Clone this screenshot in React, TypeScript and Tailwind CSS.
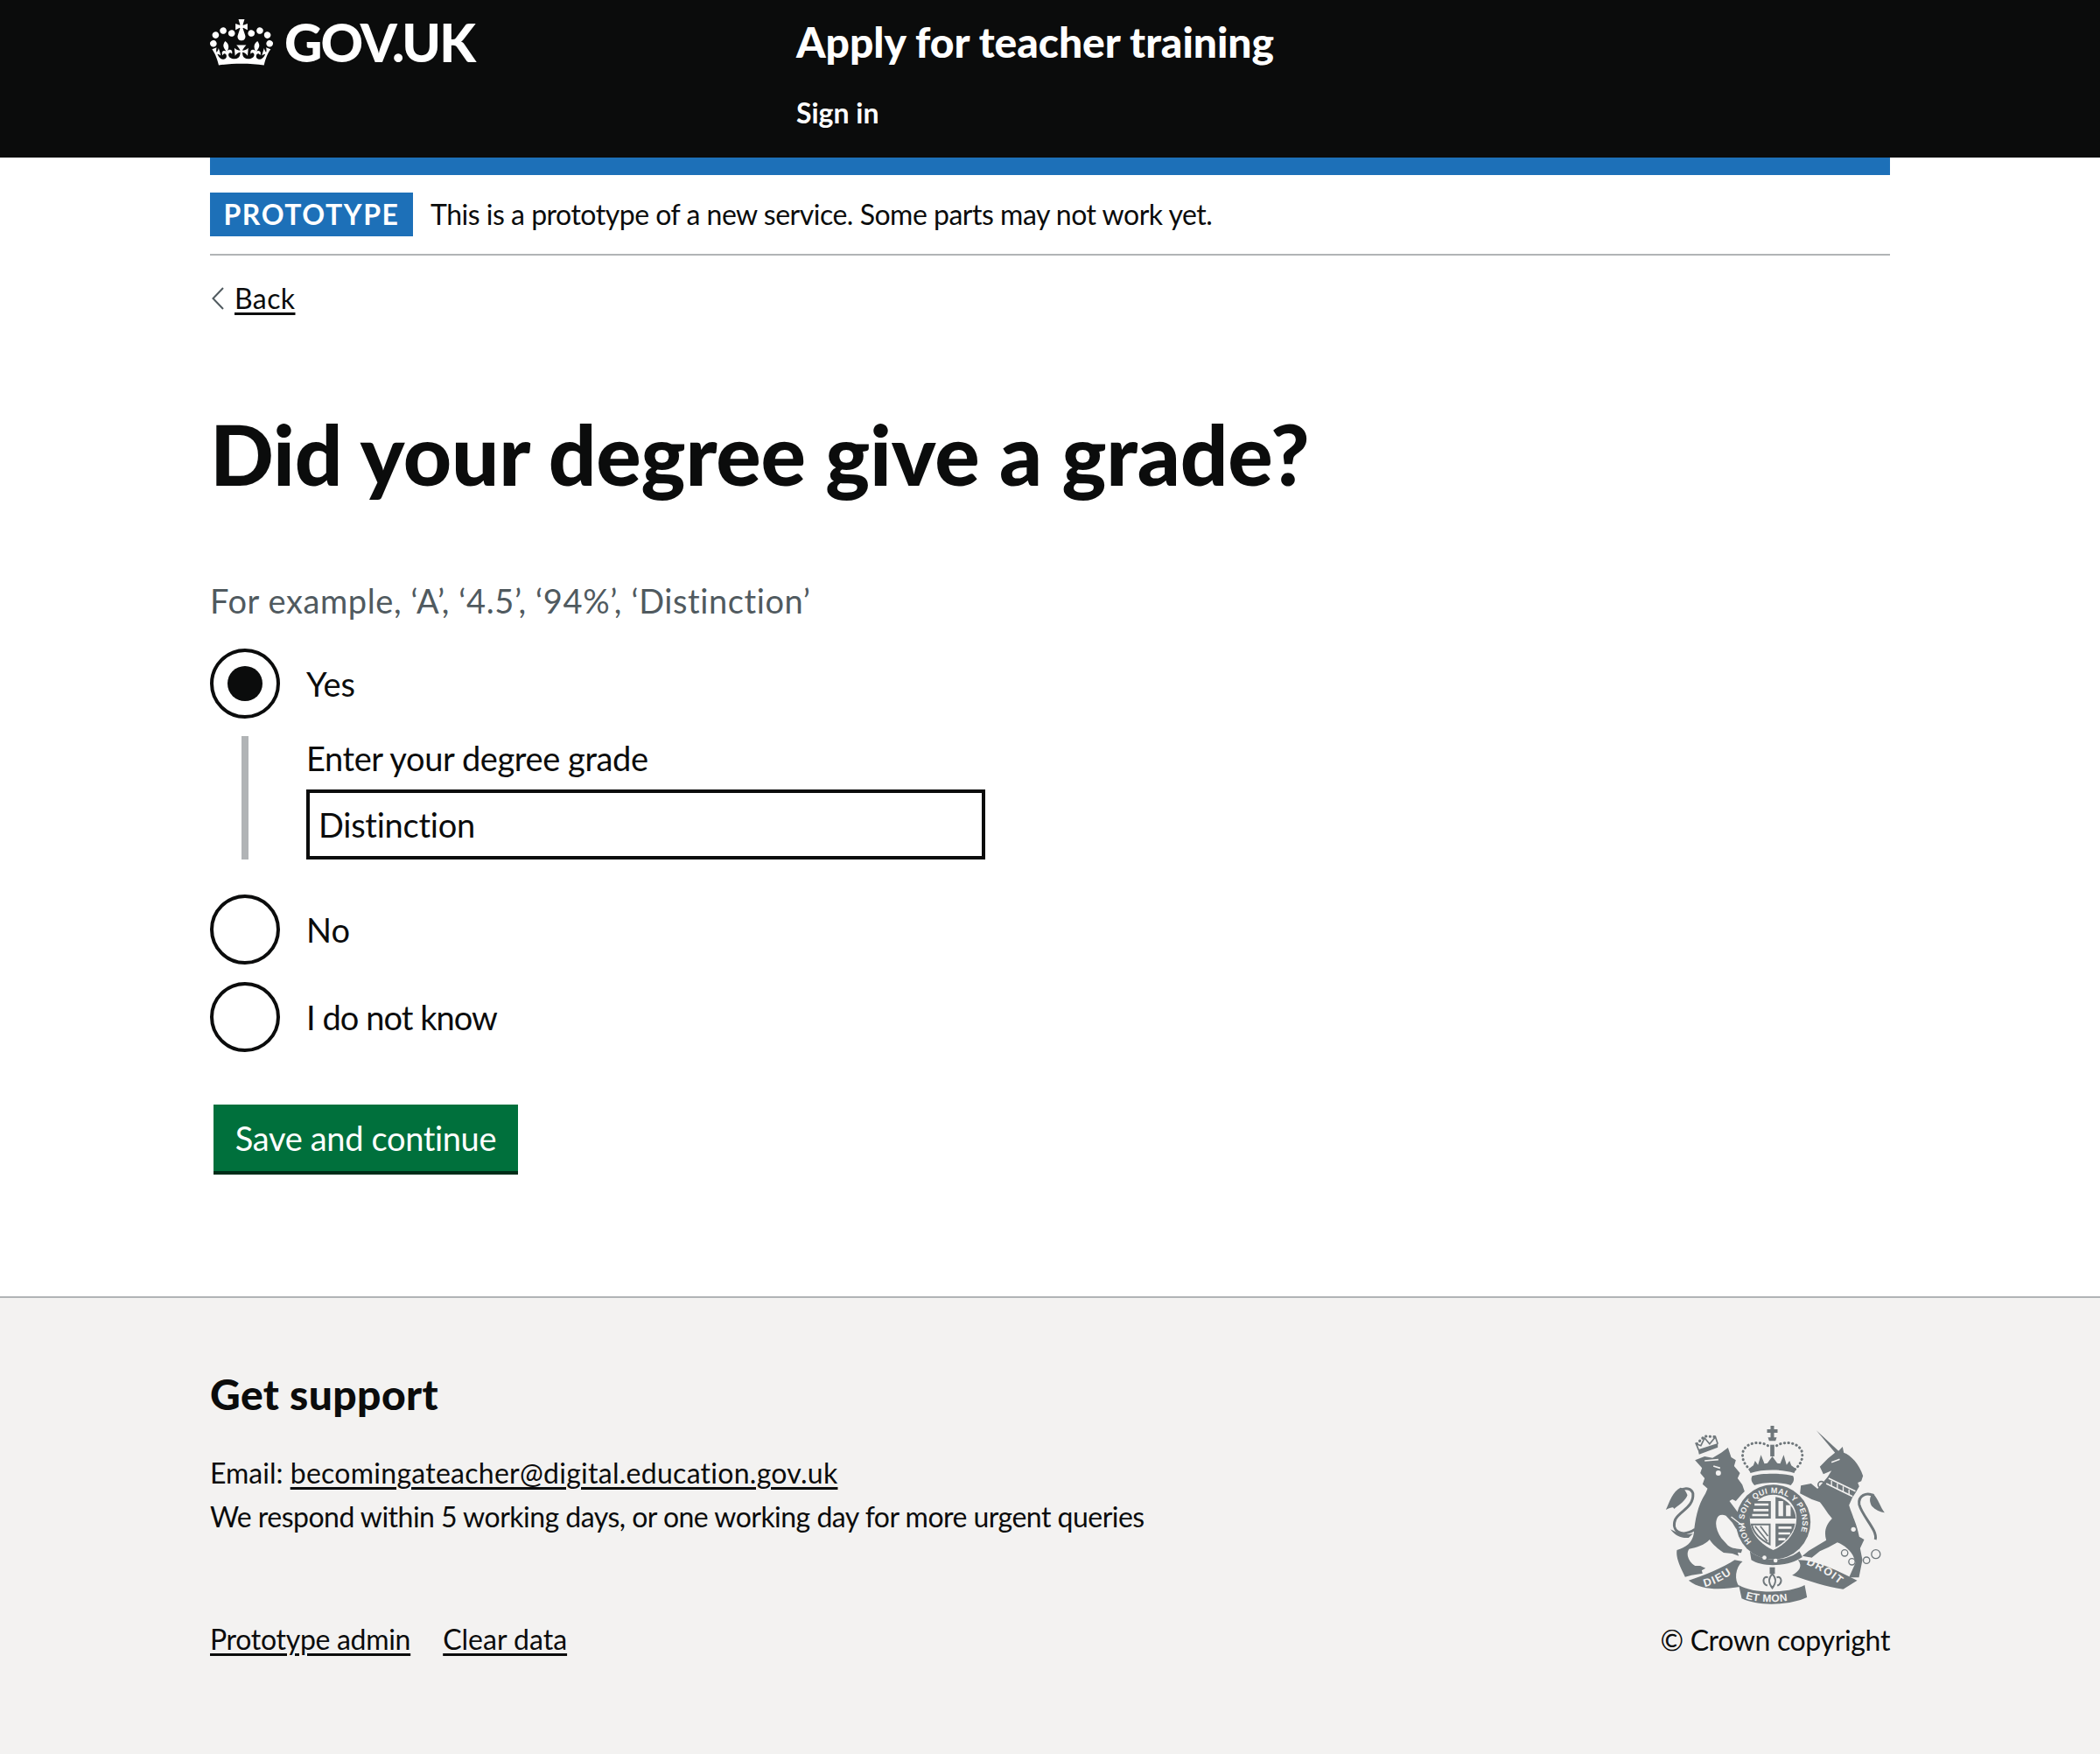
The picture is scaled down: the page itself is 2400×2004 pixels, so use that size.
const crown = "M25 30.2c3.5 1.5 7.7-.2 9.1-3.7 1.5-3.6-.2-7.8-3.9-9.2-3.6-1.4-7.6.3-9.1 3.9-1.4 3.5.3 7.5 3.9 9zM9 39.5c3.6 1.5 7.8-.2 9.2-3.7 1.5-3.6-.2-7.8-3.9-9.1-3.6-1.5-7.6.2-9.1 3.8-1.4 3.5.3 7.5 3.8 9zM4.4 57.2c3.5 1.5 7.7-.2 9.1-3.8 1.5-3.6-.2-7.7-3.9-9.1-3.5-1.5-7.6.3-9.1 3.8-1.4 3.5.3 7.6 3.9 9.1zm38.3-21.4c3.5 1.5 7.7-.2 9.1-3.8 1.5-3.6-.2-7.7-3.9-9.1-3.6-1.5-7.6.3-9.1 3.8-1.3 3.6.4 7.7 3.9 9.1zm64.4-5.6c-3.6 1.5-7.8-.2-9.1-3.7-1.5-3.6.2-7.8 3.8-9.2 3.6-1.4 7.7.3 9.2 3.9 1.3 3.5-.4 7.5-3.9 9zm15.9 9.3c-3.6 1.5-7.7-.2-9.1-3.7-1.5-3.6.2-7.8 3.7-9.1 3.6-1.5 7.7.2 9.2 3.8 1.5 3.5-.3 7.5-3.8 9zm4.7 17.7c-3.6 1.5-7.8-.2-9.2-3.8-1.5-3.6.2-7.7 3.9-9.1 3.6-1.5 7.7.3 9.2 3.8 1.3 3.5-.4 7.6-3.9 9.1zM89.3 35.8c-3.6 1.5-7.8-.2-9.2-3.8-1.4-3.6.2-7.7 3.9-9.1 3.6-1.5 7.7.3 9.2 3.8 1.4 3.6-.3 7.7-3.9 9.1zM69.7 17.7l8.9 4.7V9.3l-8.9 2.8c-.2-.3-.5-.6-.9-.9L72.4 0H59.6l3.5 11.2c-.3.3-.6.5-.9.9l-8.8-2.8v13.1l8.8-4.7c.3.3.6.7.9.9l-5 15.4v.1c-.2.8-.4 1.6-.4 2.4 0 4.1 3.1 7.5 7 8.1h.2c.3 0 .7.1 1 .1.4 0 .7 0 1-.1h.2c4-.6 7.1-4.1 7.1-8.1 0-.8-.1-1.7-.4-2.4V34l-5.1-15.4c.4-.2.7-.6 1-.9zM66 92.8c16.9 0 32.8 1.1 47.1 3.2 4-16.9 8.9-26.7 14-33.5l-9.6-3.4c1 4.9 1.1 7.2 0 10.2-1.5-1.4-3-4.3-4.2-8.7L108.6 76c2.8-2 5-3.2 7.5-3.3-4.4 9.4-10 11.9-13.6 11.2-4.3-.8-6.3-4.6-5.6-7.9 1-4.7 5.7-5.9 8-.5 4.3-8.7-3-11.4-7.6-8.8 7.1-7.2 7.9-13.5 2.1-21.1-8 6.1-8.1 12.3-4.5 20.8-4.7-5.4-12.1-2.5-9.5 6.2 3.4-5.2 7.9-2 7.2 3.1-.6 4.3-6.4 7.8-13.5 7.2-10.3-.9-10.9-8-11.2-13.8 2.5-.5 7.1 1.8 11 7.3L80.2 60c-4.1 4.4-8 5.3-12.3 5.4 1.4-4.4 8-11.6 8-11.6H55.5s6.4 7.2 7.9 11.6c-4.2-.1-8-1-12.3-5.4l1.4 16.4c3.9-5.5 8.5-7.7 10.9-7.3-.3 5.8-.9 12.8-11.1 13.8-7.2.6-12.9-2.9-13.5-7.2-.7-5 3.8-8.3 7.1-3.1 2.7-8.7-4.6-11.6-9.4-6.2 3.7-8.5 3.6-14.7-4.6-20.8-5.8 7.6-5 13.9 2.2 21.1-4.7-2.6-11.9.1-7.7 8.8 2.3-5.5 7.1-4.2 8.1.5.7 3.3-1.3 7.1-5.7 7.9-3.5.7-9-1.8-13.5-11.2 2.5.1 4.7 1.3 7.5 3.3l-4.7-15.4c-1.2 4.4-2.7 7.2-4.3 8.7-1.1-3-.9-5.3 0-10.2l-9.5 3.4c5 6.9 9.9 16.7 14 33.5 14.8-2.1 30.8-3.2 47.7-3.2z";

const GREY = '#6f777b';
const BG = '#f3f2f1';

// Royal coat of arms, coordinates taken from a 3x crop of the crest
function RoyalArms() {
  return (
    <svg viewBox="70 60 755 612" className="w-[252px] h-[204px] mr-[5px]" aria-hidden="true">
      <defs>
        <path id="garter" d="M366 458 A100 100 0 1 1 514 458" />
        <path id="dieu" d="M205 612 C245 603 285 580 318 552" />
        <path id="etmon" d="M345 652 C390 668 490 668 530 648" />
        <path id="droit" d="M552 535 C590 548 640 580 680 614" />
      </defs>
      <g fill={GREY}>
        {/* lion */}
        <path d="M172 178L205 165L232 170L262 152L285 135L296 168L312 178L306 198L326 222L318 240L334 262L342 285C330 295 322 308 312 318L300 312L290 318L350 398L332 408L330 420L340 405C330 415 320 420 312 412L300 392L278 368C262 362 250 366 246 382C240 400 248 425 262 445L285 470C300 482 318 480 334 484L330 496L318 494L322 506L300 498L270 495C250 482 232 466 222 450C205 468 178 478 152 482C140 498 148 525 172 540L190 540L208 548L195 556L198 566L160 572L138 578C122 545 105 512 110 486C140 476 163 462 168 428C172 385 180 335 208 292L215 275L198 260L205 240L190 222L196 205Z" />
        <path d="M122 272C95 285 85 320 72 348C90 340 98 336 100 345C120 330 138 318 146 298C140 280 130 272 122 272Z" />
        <path d="M88 415C112 428 135 436 165 430L150 444C125 446 105 438 88 415Z" />
        {/* lion's crown */}
        <path d="M186 158L250 134L250 120L182 142Z" />
        {/* unicorn */}
        <path d="M588 76L664 146L678 132L682 152C705 160 735 190 748 232L742 250L730 255L735 268L722 290L712 305L700 332C712 370 728 400 735 440L752 450L738 480L746 520L734 580L700 580L722 530C716 495 690 472 660 460C640 472 620 482 600 490L572 512L540 506L562 488L622 452C612 420 624 395 642 378C622 355 612 335 600 322L572 312L532 292L535 265L570 258L592 276L626 236L640 214L612 226L600 200L628 172L652 152Z" />
        <path d="M782 292C800 310 808 340 822 358C808 356 790 348 778 335C770 322 768 305 782 292Z" />
        {/* central crown */}
        <path d="M431 60H443V72H455V84H443V100H452L448 112H426L422 100H431V84H419V72H431Z" />
        <path d="M430 125H444V165H430Z" />
        <path d="M356 208L372 196L378 180L388 194L398 160L410 190L420 188L437 165L454 188L464 190L476 160L486 194L496 180L502 196L518 208L512 222C470 208 405 208 362 222Z" />
        <path d="M368 232C400 222 476 222 508 232C514 242 510 255 500 264C470 252 405 252 376 264C366 255 362 242 368 232Z" />
        {/* roundel and buckle */}
        <circle cx="440" cy="390" r="128" />
        <path d="M360 490C400 525 480 530 530 490L540 510C490 545 400 545 365 520Z" />
        {/* motto scrolls */}
        <path d="M150 590C200 575 270 545 308 520L335 525C310 545 305 590 325 612C280 618 200 630 150 590Z" />
        <path d="M322 606C370 636 490 636 548 606L556 648C490 678 385 678 332 652Z" />
        <path d="M525 520C590 520 665 560 728 590L680 620C620 612 565 592 505 572C530 560 542 540 525 520Z" />
        <path d="M428 545H446V568H428Z" />
      </g>
      <g fill="none" stroke={GREY}>
        <path strokeWidth="9" d="M172 415C125 445 88 420 105 380C122 350 168 340 165 292C160 274 138 270 122 282" />
        <path strokeWidth="9" d="M790 450C800 420 745 370 735 330C730 300 760 285 785 300" />
        <path strokeWidth="5" d="M184 142L176 122L192 128L205 102L222 122L242 98L250 122" />
        <path strokeWidth="9" strokeDasharray="1 13" strokeLinecap="round" d="M178 122L204 96L244 98" />
        <path strokeWidth="9" strokeDasharray="1 13" strokeLinecap="round" d="M422 128C390 108 335 120 335 160C335 185 350 200 362 212" />
        <path strokeWidth="9" strokeDasharray="1 13" strokeLinecap="round" d="M452 128C484 108 540 120 540 160C540 185 525 200 512 212" />
        <circle cx="685" cy="496" r="11" strokeWidth="4" />
        <circle cx="710" cy="526" r="11" strokeWidth="4" />
        <circle cx="760" cy="521" r="11" strokeWidth="4" />
        <circle cx="792" cy="500" r="15" strokeWidth="4" />
        <circle cx="605" cy="262" r="11" strokeWidth="5" />
        {/* fleur */}
        <path strokeWidth="6" d="M437 568C420 585 425 600 437 616C449 600 454 585 437 568ZM422 580C405 572 400 600 420 608M452 580C469 572 474 600 454 608" fill={BG} />
      </g>
      <g fill={BG}>
        <path d="M440 296C485 296 520 332 520 378C520 430 480 468 440 486C400 468 360 430 360 378C360 332 395 296 440 296Z" />
        <circle cx="252" cy="222" r="9" />
        <circle cx="715" cy="415" r="8" />
        <circle cx="725" cy="370" r="10" />
        <circle cx="590" cy="345" r="11" />
        <circle cx="410" cy="512" r="7" />
        <circle cx="448" cy="522" r="7" />
      </g>
      <g fill="none" stroke={BG}>
        <path strokeWidth="5" d="M205 180L252 176M235 198L258 205M640 185L668 175" />
        <path strokeWidth="5" d="M630 240L722 284M622 258L712 302" />
        <path strokeWidth="4" d="M640 248V268M660 258V278M680 268V288M700 278V296" />
        <path strokeWidth="4" d="M296 372L345 410" />
      </g>
      <g fill={GREY}>
        <path d="M368 318H432V378H360C360 355 360 335 368 318Z" />
        <path d="M448 304C485 308 515 340 518 378H448Z" />
        <path d="M448 395H515C510 430 480 460 448 476Z" />
      </g>
      <g fill={BG}>
        <path d="M376 326H424V334H376ZM372 345H424V353H372ZM368 362H424V370H368Z" />
        <path d="M458 318H474V370H458ZM484 332H500V370H484Z" />
        <path d="M458 405H503V413H458ZM458 425H498V433H458ZM458 445H482V453H458Z" />
      </g>
      <path d="M366 398H428V466C400 452 374 430 366 398Z" fill="none" stroke={GREY} strokeWidth="6" />
      <path d="M378 404L420 456M396 404L422 438" fill="none" stroke={GREY} strokeWidth="5" />
      <g fill={BG} fontFamily="'Liberation Sans', sans-serif" fontWeight="700">
        <text fontSize="27" letterSpacing="1.5"><textPath href="#garter">HONI SOIT QUI MAL Y PENSE</textPath></text>
        <text fontSize="38" letterSpacing="4"><textPath href="#dieu">DIEU</textPath></text>
        <text fontSize="36" letterSpacing="1"><textPath href="#etmon">ET MON</textPath></text>
        <text fontSize="38" letterSpacing="4"><textPath href="#droit">DROIT</textPath></text>
      </g>
    </svg>
  );
}

function Radio({ label, checked, tracking }: { label: string; checked?: boolean; tracking?: string }) {
  return (
    <div className="flex items-center h-[80px]">
      <span className="w-[80px] h-[80px] rounded-full border-[4px] border-[#0b0c0c] flex items-center justify-center">
        {checked && <span className="w-[40px] h-[40px] rounded-full bg-[#0b0c0c]" />}
      </span>
      <span className={`ml-[30px] text-[38px] leading-[50px] ${tracking ?? ''}`}>{label}</span>
    </div>
  );
}

export default function App() {
  return (
    <div className="min-h-[2004px] flex flex-col bg-white text-[#0b0c0c] font-['Lato',sans-serif]">
      <header className="bg-[#0b0c0c] text-white h-[180px]">
        <div className="w-[1920px] mx-auto flex">
          <div className="w-[670px] flex items-center h-[96px] gap-[13px]">
            <svg viewBox="0 0 132 97" className="w-[72px] h-[53px] fill-white" aria-hidden="true">
              <path d={crown} />
            </svg>
            <span className="font-black text-[60px] leading-[60px] tracking-[-1.9px]">GOV.UK</span>
          </div>
          <div className="flex flex-col">
            <a className="font-black text-[48px] leading-[60px] mt-[18px] tracking-[-0.07px]">Apply for teacher training</a>
            <a className="font-bold text-[32px] leading-[40px] mt-[31px]">Sign in</a>
          </div>
        </div>
      </header>

      <div className="w-[1920px] mx-auto">
        <div className="h-[20px] bg-[#1d70b8]" />
        <div className="flex items-center h-[90px] border-b-2 border-[#b1b4b6] gap-[20px] box-content">
          <strong className="bg-[#1d70b8] text-white font-bold text-[32px] tracking-[1.6px] w-[232px] h-[50px] flex items-center justify-center">PROTOTYPE</strong>
          <span className="text-[32px] tracking-[-0.49px]">This is a prototype of a new service. Some parts may not work yet.</span>
        </div>
        <a className="flex items-center mt-[29px] text-[32px] leading-[40px]">
          <svg viewBox="0 0 14 26" className="w-[14px] h-[26px] ml-[2px] mr-[12px]" aria-hidden="true">
            <path d="M13 1L1.5 13L13 25" fill="none" stroke="#505a5f" strokeWidth="2" />
          </svg>
          <span className="underline underline-offset-[4px] tracking-[0.4px]">Back</span>
        </a>

        <h1 className="font-black text-[96px] leading-[100px] mt-[107px] tracking-[-0.22px]">Did your degree give a grade?</h1>

        <p className="text-[38px] leading-[50px] text-[#505a5f] mt-[93px] tracking-[0.6px]">For example, ‘A’, ‘4.5’, ‘94%’, ‘Distinction’</p>

        <div className="mt-[30px] flex flex-col">
          <Radio label="Yes" checked />
          <div className="flex mt-[20px] ml-[36px] border-l-[8px] border-[#b1b4b6] pl-[66px] flex-col h-[141px]">
            <label className="text-[38px] leading-[50px] tracking-[-0.4px]">Enter your degree grade</label>
            <div className="w-[776px] h-[80px] border-[4px] border-[#0b0c0c] mt-[11px] flex items-center px-[10px] text-[38px] tracking-[-0.25px]">Distinction</div>
          </div>
          <div className="mt-[40px]"><Radio label="No" /></div>
          <div className="mt-[20px]"><Radio label="I do not know" tracking="tracking-[-0.95px]" /></div>
        </div>

        <button className="mt-[60px] ml-[4px] w-[348px] h-[80px] bg-[#00703c] text-white text-[38px] border-b-[4px] border-[#002d18] tracking-[-0.35px]">Save and continue</button>
      </div>

      <footer className="mt-[139px] flex-1 bg-[#f3f2f1] border-t-2 border-[#b1b4b6]">
        <div className="w-[1920px] mx-auto flex justify-between pt-[80px]">
          <div className="flex flex-col">
            <h2 className="font-black text-[48px] leading-[60px] tracking-[0.4px]">Get support</h2>
            <p className="text-[32px] leading-[50px] mt-[35px]">Email: <a className="underline underline-offset-[4px] tracking-[0.27px]">becomingateacher@digital.education.gov.uk</a></p>
            <p className="text-[32px] leading-[50px] tracking-[-0.52px]">We respond within 5 working days, or one working day for more urgent queries</p>
            <div className="flex gap-[37px] text-[32px] leading-[40px] mt-[95px]">
              <a className="underline underline-offset-[4px] tracking-[-0.3px]">Prototype admin</a>
              <a className="underline underline-offset-[4px]">Clear data</a>
            </div>
          </div>
          <div className="flex flex-col items-end mt-[66px]">
            <RoyalArms />
            <span className="text-[32px] leading-[40px] mt-[21px] tracking-[-0.35px]">© Crown copyright</span>
          </div>
        </div>
      </footer>
    </div>
  );
}
